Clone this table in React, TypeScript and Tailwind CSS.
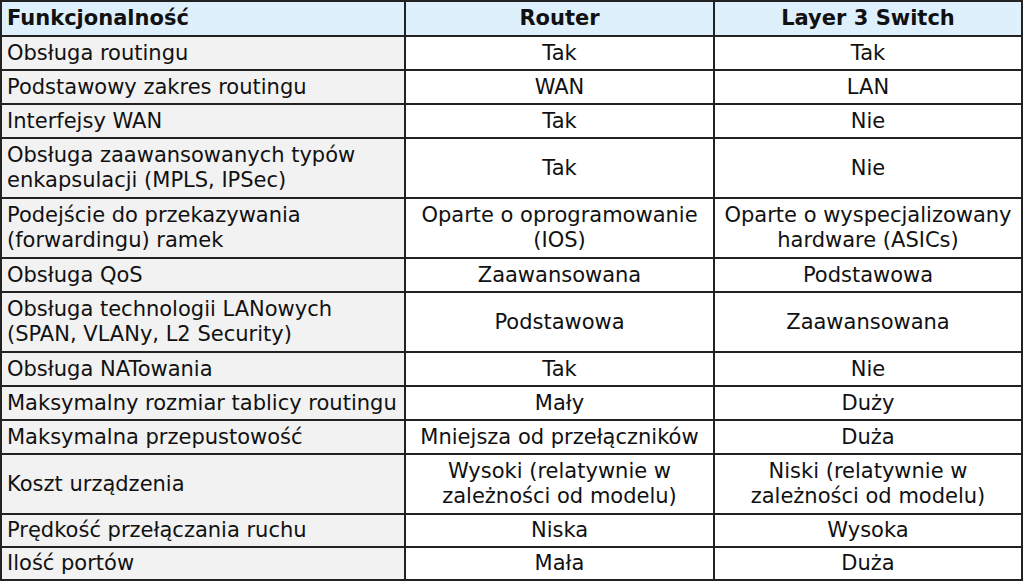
import React from 'react'

type Row = {
  label: React.ReactNode
  router: React.ReactNode
  l3: React.ReactNode
  tall?: boolean
  h?: string
}

const rows: Row[] = [
  { label: 'Obsługa routingu', router: 'Tak', l3: 'Tak' },
  { label: 'Podstawowy zakres routingu', router: 'WAN', l3: 'LAN' },
  { label: 'Interfejsy WAN', router: 'Tak', l3: 'Nie' },
  {
    label: (
      <>
        Obsługa zaawansowanych typów
        <br />
        enkapsulacji (MPLS, IPSec)
      </>
    ),
    router: 'Tak',
    l3: 'Nie',
    tall: true,
  },
  {
    label: (
      <>
        Podejście do przekazywania
        <br />
        (forwardingu) ramek
      </>
    ),
    router: (
      <>
        Oparte o oprogramowanie
        <br />
        (IOS)
      </>
    ),
    l3: (
      <>
        Oparte o wyspecjalizowany
        <br />
        hardware (ASICs)
      </>
    ),
    tall: true,
  },
  { label: 'Obsługa QoS', router: 'Zaawansowana', l3: 'Podstawowa' },
  {
    label: (
      <>
        Obsługa technologii LANowych
        <br />
        (SPAN, VLANy, L2 Security)
      </>
    ),
    router: 'Podstawowa',
    l3: 'Zaawansowana',
    tall: true,
  },
  { label: 'Obsługa NATowania', router: 'Tak', l3: 'Nie' },
  { label: 'Maksymalny rozmiar tablicy routingu', router: 'Mały', l3: 'Duży' },
  { label: 'Maksymalna przepustowość', router: 'Mniejsza od przełączników', l3: 'Duża' },
  {
    label: 'Koszt urządzenia',
    router: (
      <>
        Wysoki (relatywnie w
        <br />
        zależności od modelu)
      </>
    ),
    l3: (
      <>
        Niski (relatywnie w
        <br />
        zależności od modelu)
      </>
    ),
    tall: true,
  },
  { label: 'Prędkość przełączania ruchu', router: 'Niska', l3: 'Wysoka', h: 'h-[33px]' },
  { label: 'Ilość portów', router: 'Mała', l3: 'Duża', h: 'h-[33px]' },
]

function App() {
  return (
    <div className="h-[581px] w-[1024px] overflow-hidden bg-white font-['DejaVu_Sans',Verdana,sans-serif] text-[21px] leading-[25px] text-[#111]">
      <div className="grid w-[1023px] grid-cols-[404px_309px_308px] border-l-2 border-t-2 border-[#222]">
        <div className="flex h-[35px] items-center border-b-2 border-r-2 border-[#222] bg-[#dff0fd] pl-[5px] font-bold">
          Funkcjonalność
        </div>
        <div className="flex h-[35px] items-center justify-center border-b-2 border-r-2 border-[#222] bg-[#dff0fd] font-bold">
          Router
        </div>
        <div className="flex h-[35px] items-center justify-center border-b-2 border-r-2 border-[#222] bg-[#dff0fd] font-bold">
          Layer 3 Switch
        </div>
        {rows.map((r, i) => {
          const h = r.h ?? (r.tall ? 'h-[60px]' : 'h-[34px]')
          return (
            <React.Fragment key={i}>
              <div className={`${h} flex items-center border-b-2 border-r-2 border-[#222] bg-[#f2f2f2] pl-[5px]`}>
                <div>{r.label}</div>
              </div>
              <div className={`${h} flex items-center justify-center border-b-2 border-r-2 border-[#222] text-center`}>
                <div>{r.router}</div>
              </div>
              <div className={`${h} flex items-center justify-center border-b-2 border-r-2 border-[#222] text-center`}>
                <div>{r.l3}</div>
              </div>
            </React.Fragment>
          )
        })}
      </div>
    </div>
  )
}

export default App
